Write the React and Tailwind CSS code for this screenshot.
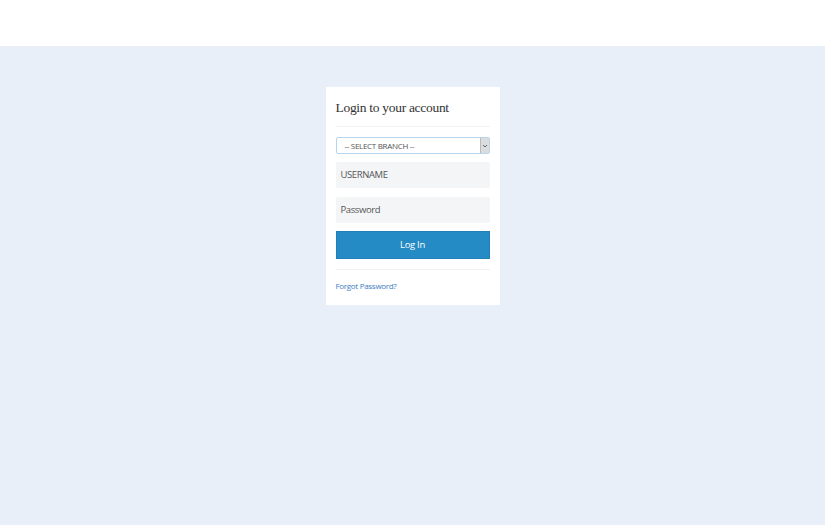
import React from "react";

const App = () => {
  return (
    <div className="w-full h-[525px] bg-[#e9eff8] flex flex-col">
      <div className="h-[46px] bg-white w-full" />
      <div className="flex justify-center pt-[41px]">
        <div className="w-[174px] bg-white px-[10px] pt-[11px] pb-[14px]">
          <h1 className="text-[13.5px] leading-[20px] tracking-[-0.3px] text-[#333] font-['Liberation_Serif',serif]">
            Login to your account
          </h1>
          <div className="mt-[8px] h-px bg-[#f0f2f4]" />
          <div className="mt-[10px] h-[17px] border border-[#b5d6ee] rounded-[2px] flex items-center justify-between bg-white">
            <span className="pl-[8px] text-[8px] tracking-[-0.3px] text-[#555] font-['Open_Sans',sans-serif]">
              -- SELECT BRANCH --
            </span>
            <div className="h-full w-[9px] bg-[#dcdcdc] border-l border-[#bbb] flex items-center justify-center">
              <svg width="6" height="4" viewBox="0 0 6 4">
                <path d="M1 1 L3 3 L5 1" stroke="#555" strokeWidth="0.9" fill="none" />
              </svg>
            </div>
          </div>
          <div className="mt-[8px] h-[26px] bg-[#f4f5f7] rounded-[2px] flex items-center pl-[5px] text-[9.5px] tracking-[-0.4px] text-[#555] font-['Open_Sans',sans-serif]">
            USERNAME
          </div>
          <div className="mt-[9px] h-[26px] bg-[#f4f5f7] rounded-[2px] flex items-center pl-[5px] text-[9.5px] tracking-[-0.4px] text-[#555] font-['Open_Sans',sans-serif]">
            Password
          </div>
          <button className="mt-[8px] w-full h-[28px] bg-[#248bc4] border border-[#1f7fb6] text-white text-[9.5px] tracking-[-0.3px] font-['Open_Sans',sans-serif] flex items-center justify-center">
            Log In
          </button>
          <div className="mt-[10px] h-px bg-[#f0f2f4]" />
          <div className="mt-[11px] text-[8px] leading-[10px] tracking-[-0.3px] text-[#3d7ec2] font-['Open_Sans',sans-serif]">
            Forgot Password?
          </div>
        </div>
      </div>
    </div>
  );
};

export default App;
